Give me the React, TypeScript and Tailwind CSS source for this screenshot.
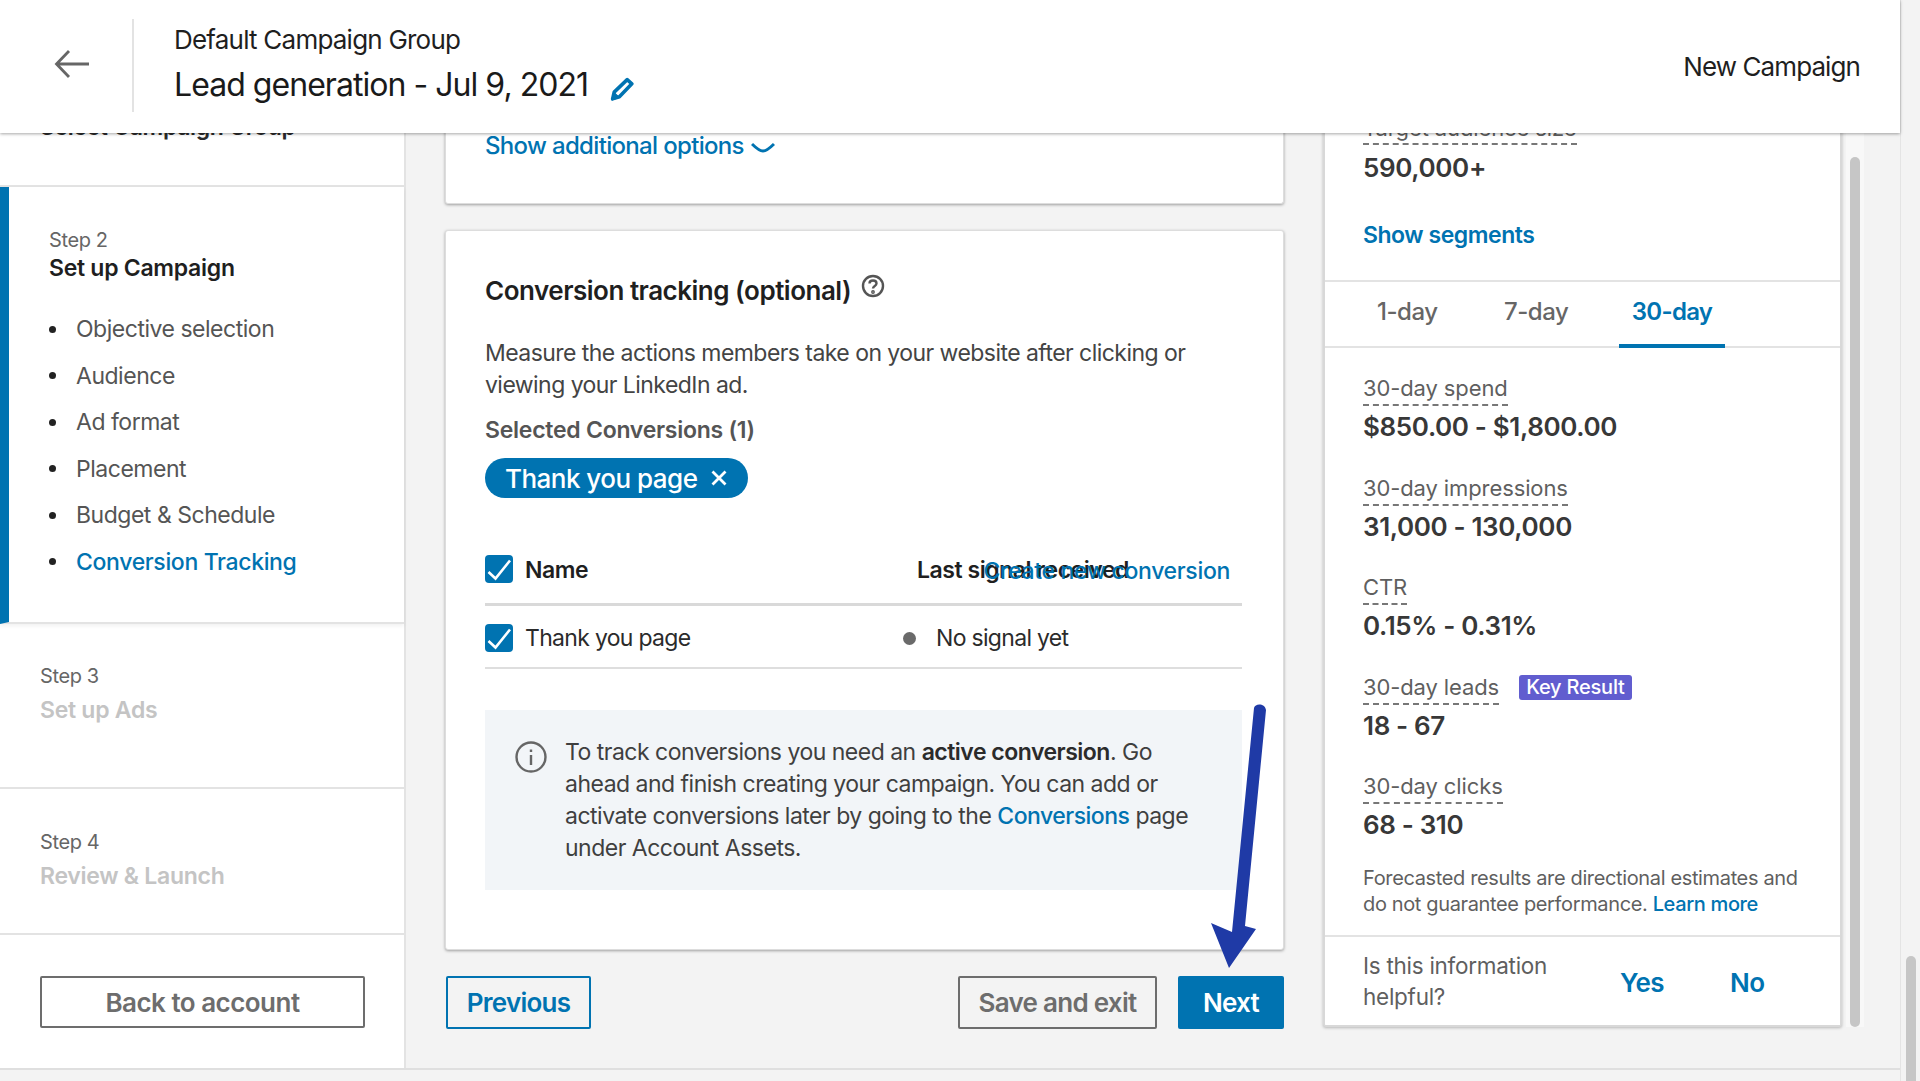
import React from "react";

const Check = () => (
  <span className="flex h-[28px] w-[28px] shrink-0 items-center justify-center rounded-[4px] bg-[#0073b1]">
    <svg width="28" height="28" viewBox="0 0 28 28" fill="none" stroke="#fff" strokeWidth="2.6">
      <path d="M3.5 17 L10.5 23.5 L25 5.5" />
    </svg>
  </span>
);

const Metric = ({ label, value, badge }: { label: string; value: string; badge?: boolean }) => (
  <div className="h-[99.6px]">
    <div className="flex items-start">
      <span className="border-b-2 border-dashed border-[#777] pb-[1px] text-[22px] leading-[30px] tracking-[-0.005em] text-[#5f5f5f]">{label}</span>
      {badge && (
        <span className="ml-[20px] mt-[3px] rounded-[3px] bg-[#615dcf] px-[7px] text-[20px] font-medium leading-[25px] tracking-[-0.01em] text-white">Key Result</span>
      )}
    </div>
    <div className="mt-[3px] text-[26px] font-semibold leading-[36px] tracking-[-0.014em] text-[#383838]">{value}</div>
  </div>
);

export default function App() {
  return (
    <div className="flex h-[1081px] w-[1920px] overflow-hidden bg-[#f3f3f3] tracking-[-0.03em] text-[#2b2b2b]" style={{ fontFamily: "Inter, 'Liberation Sans', sans-serif" }}>
      <div className="relative w-[1901px] shrink-0 border-r border-[#e4e4e4]">
        {/* Header */}
        <header className="absolute left-0 top-0 z-10 flex h-[133px] w-full items-center bg-white shadow-[0_1px_3px_rgba(0,0,0,0.35)]">
          <div className="flex h-[93px] w-[134px] -translate-y-[1px] items-center justify-center border-r-2 border-[#e3e3e3] pl-[12px] pb-[4px]">
            <svg width="36" height="32" viewBox="0 0 36 32" fill="none" stroke="#666" strokeWidth="2.8">
              <path d="M35 16 H3 M15 3 L2.5 16 L15 29" />
            </svg>
          </div>
          <div className="ml-[40px] flex-1 -translate-y-[2px]">
            <div className="text-[26px] leading-[36px] tracking-[-0.03em] text-[#1f1f1f]">Default Campaign Group</div>
            <div className="mt-[5px] flex items-center text-[32px] leading-[44px] tracking-[-0.03em] text-[#1a1a1a]">
              <span>Lead generation - Jul 9, 2021</span>
              <svg className="ml-[22px] mt-[6px]" width="25" height="25" viewBox="0 0 24 24" fill="none" stroke="#0073b1" strokeWidth="3.4" strokeLinejoin="round">
                <path d="M16.5 3.5 L21 7.5 L9 20 L2.5 22 L4 15.5 Z" />
                <path d="M2 23 L4 16 L9 20.5 Z" fill="#0073b1" strokeWidth="1" />
              </svg>
            </div>
          </div>
          <div className="mr-[40px] text-[26px] tracking-[-0.035em] text-[#1f1f1f]">New Campaign</div>
        </header>

        <div className="flex h-[1070px] border-b-2 border-[#dfdfdf]">
          {/* Sidebar */}
          <aside className="flex w-[406px] shrink-0 flex-col border-r-2 border-[#e3e3e3] bg-white">
            <div className="h-[187px] border-b-2 border-[#e3e3e3] pl-[40px] pt-[113px] text-[23px] font-semibold leading-[28px] tracking-[-0.015em] text-[#2b2b2b]">Select Campaign Group</div>
            <div className="h-[437px] border-b-2 border-l-[9px] border-[#e3e3e3] border-l-[#0073b1] pl-[40px] pt-[39px] shadow-[0_2px_4px_rgba(0,0,0,0.06)]">
              <div className="text-[20px] leading-[28px] tracking-[-0.02em] text-[#666]">Step 2</div>
              <div className="-mt-[2px] text-[23px] font-semibold leading-[32px] tracking-[-0.012em] text-[#1f1f1f]">Set up Campaign</div>
              <ul className="mt-[29px] text-[23px] leading-[32px] text-[#555]">
                {["Objective selection", "Audience", "Ad format", "Placement", "Budget & Schedule"].map((t) => (
                  <li key={t} className="mb-[14.5px] flex items-center">
                    <span className="mr-[20px] h-[7px] w-[7px] rounded-full bg-[#222]" />
                    {t}
                  </li>
                ))}
                <li className="flex items-center font-medium tracking-[-0.015em] text-[#0073b1]">
                  <span className="mr-[20px] h-[7px] w-[7px] rounded-full bg-[#222]" />
                  Conversion Tracking
                </li>
              </ul>
            </div>
            <div className="h-[165px] border-b-2 border-[#e3e3e3] pl-[40px] pt-[38px]">
              <div className="text-[20px] leading-[28px] tracking-[-0.02em] text-[#666]">Step 3</div>
              <div className="mt-[4px] text-[23px] font-semibold leading-[32px] tracking-[-0.012em] text-[#c4c4c4]">Set up Ads</div>
            </div>
            <div className="h-[146px] border-b-2 border-[#e3e3e3] pl-[40px] pt-[39px]">
              <div className="text-[20px] leading-[28px] tracking-[-0.02em] text-[#666]">Step 4</div>
              <div className="mt-[4px] text-[23px] font-semibold leading-[32px] tracking-[-0.012em] text-[#c4c4c4]">Review &amp; Launch</div>
            </div>
            <div className="px-[40px] pt-[41px]">
              <button className="h-[52px] w-[325px] rounded-[2px] border-2 border-[#6d6d6d] text-[26px] font-semibold tracking-[-0.02em] text-[#6d6d6d]">Back to account</button>
            </div>
          </aside>

          {/* Middle column */}
          <main className="ml-[39px] flex w-[839px] shrink-0 flex-col">
            <div className="h-[204px] rounded-[3px] border-x border-b border-[#ddd] bg-white pl-[39px] pt-[129px] shadow-[0_1px_3px_rgba(0,0,0,0.35)]">
              <div className="flex items-center text-[24px] font-medium leading-[34px] tracking-[-0.028em] text-[#0073b1]">
                Show additional options
                <svg className="ml-[7px] mt-[3px]" width="24" height="12" viewBox="0 0 24 12" fill="none" stroke="#0073b1" strokeWidth="3">
                  <path d="M1 2 C6 7 9 9 12 9 C15 9 18 7 23 2" />
                </svg>
              </div>
            </div>
            <section className="relative mt-[26px] h-[720px] rounded-[3px] border border-[#ddd] bg-white pl-[39px] pr-[40px] pt-[40px] shadow-[0_1px_3px_rgba(0,0,0,0.35)]">
              <div className="flex items-start">
                <h2 className="text-[26px] font-semibold leading-[40px] tracking-[-0.019em] text-[#1f1f1f]">Conversion tracking (optional)</h2>
                <svg className="ml-[10px] mt-[3px]" width="24" height="24" viewBox="0 0 24 24" fill="none" stroke="#555" strokeWidth="2.4">
                  <circle cx="12" cy="12" r="10" />
                  <path d="M8.5 9.5 C8.5 5.5 15.5 5.5 15.5 9.5 C15.5 12 12 12 12 14.5" />
                  <circle cx="12" cy="18" r="0.7" />
                </svg>
              </div>
              <p className="mt-[26px] w-[760px] text-[23px] leading-[32px] tracking-[-0.024em] text-[#444]">
                Measure the actions members take on your website after clicking or viewing your LinkedIn ad.
              </p>
              <div className="mt-[13px] text-[23px] font-semibold leading-[32px] tracking-[-0.011em] text-[#555]">Selected Conversions (1)</div>
              <div className="mt-[12px] flex h-[40px] w-[263px] items-center rounded-full bg-[#0073b1] pl-[20px] text-[26px] font-medium tracking-[-0.02em] text-white">
                Thank you page
                <svg className="ml-[13px]" width="18" height="18" viewBox="0 0 18 18" fill="none" stroke="#fff" strokeWidth="2.8">
                  <path d="M2.5 2.5 L15.5 15.5 M15.5 2.5 L2.5 15.5" />
                </svg>
              </div>
              <div className="relative mt-[57px] w-[757px]">
                <div className="flex h-[51px] items-start border-b-[3px] border-[#d9d9d9] text-[23px] font-semibold leading-[30px] tracking-[-0.02em] text-[#1f1f1f]">
                  <Check />
                  <span className="ml-[12px] w-[392px]">Name</span>
                  <span>Last signal received</span>
                  <span className="absolute right-[12px] top-[1px] font-medium tracking-[-0.014em] text-[#0073b1]">Create new conversion</span>
                </div>
                <div className="flex h-[63px] items-center border-b-2 border-[#dedede] pt-[3px] text-[23px] tracking-[-0.03em] text-[#2b2b2b]">
                  <Check />
                  <span className="ml-[12px] w-[378px]">Thank you page</span>
                  <span className="h-[13px] w-[13px] rounded-full bg-[#6a6a6a]" />
                  <span className="ml-[20px]">No signal yet</span>
                </div>
              </div>
              <div className="mt-[41px] flex h-[180px] w-[757px] bg-[#f2f5f8] pl-[30px] pt-[26px] text-[23px] leading-[32px] tracking-[-0.022em] text-[#3f3f3f]">
                <svg className="mt-[5px] shrink-0" width="32" height="32" viewBox="0 0 32 32" fill="none" stroke="#666" strokeWidth="2.4">
                  <circle cx="16" cy="16" r="14.5" />
                  <path d="M16 14 V24 M16 8.5 V11" />
                </svg>
                <p className="ml-[18px] w-[635px]">
                  To track conversions you need an <b className="font-semibold text-[#2b2b2b]">active conversion</b>. Go ahead and finish creating your campaign. You can add or activate conversions later by going to the <span className="font-medium text-[#0073b1]">Conversions</span> page under Account Assets.
                </p>
              </div>
            </section>
            <div className="mt-[26px] flex h-[53px] items-stretch text-[26px] font-semibold tracking-[-0.028em]">
              <button className="ml-[1px] w-[145px] rounded-[2px] border-2 border-[#0073b1] text-[#0073b1]">Previous</button>
              <button className="ml-auto w-[199px] rounded-[2px] border-2 border-[#6d6d6d] text-[#6d6d6d]">Save and exit</button>
              <button className="ml-[21px] w-[106px] rounded-[2px] bg-[#0073b1] text-white">Next</button>
            </div>
          </main>

          {/* Right panel */}
          <aside className="ml-[39px] h-[1027px] w-[519px] shrink-0 rounded-b-[3px] border-x-2 border-b-2 border-[#d8d8d8] bg-white shadow-[0_1px_3px_rgba(0,0,0,0.25)]">
            <div className="h-[282px] border-b-2 border-[#e3e3e3] pl-[38px] pt-[113px]">
              <span className="inline-block border-b-2 border-dashed border-[#777] text-[22px] leading-[30px] tracking-[-0.005em] text-[#5f5f5f]">Target audience size</span>
              <div className="mt-[5px] text-[26px] font-semibold leading-[36px] tracking-[-0.014em] text-[#383838]">590,000+</div>
              <div className="mt-[32px] text-[23px] font-semibold leading-[34px] tracking-[-0.02em] text-[#0073b1]">Show segments</div>
            </div>
            <div className="flex h-[66px] border-b-2 border-[#e3e3e3] pl-[13px] text-[24px] font-medium tracking-[-0.02em] text-[#666]">
              <span className="w-[155px] pt-[12px] pl-[39px]">1-day</span>
              <span className="w-[126px] pt-[12px] pl-[11px]">7-day</span>
              <span className="-mb-[2px] h-[66px] w-[106px] border-b-4 border-[#0073b1] pt-[12px] text-center font-semibold tracking-[-0.03em] text-[#0073b1]">30-day</span>
            </div>
            <div className="pl-[38px] pt-[25px]">
              <Metric label="30-day spend" value="$850.00 - $1,800.00" />
              <Metric label="30-day impressions" value="31,000 - 130,000" />
              <Metric label="CTR" value="0.15% - 0.31%" />
              <Metric label="30-day leads" value="18 - 67" badge />
              <Metric label="30-day clicks" value="68 - 310" />
              <p className="-mt-[6px] w-[445px] text-[20px] leading-[26px] tracking-[-0.018em] text-[#5f5f5f]">
                Forecasted results are directional estimates and do not guarantee performance. <span className="font-medium text-[#0073b1]">Learn more</span>
              </p>
            </div>
            <div className="mt-[18px] flex border-t-2 border-[#e3e3e3] pl-[38px] pt-[13px]">
              <p className="w-[200px] text-[22.5px] leading-[31px] tracking-[-0.012em] text-[#5f5f5f]">Is this information helpful?</p>
              <span className="ml-[57px] mt-[17px] text-[26px] font-semibold leading-[32px] tracking-[-0.02em] text-[#0073b1]">Yes</span>
              <span className="ml-[66px] mt-[17px] text-[26px] font-semibold leading-[32px] tracking-[-0.02em] text-[#0073b1]">No</span>
            </div>
          </aside>

          {/* Inner scrollbar */}
          <div className="ml-[4px] h-[1027px] w-[18px] bg-[#f8f8f8] px-[4px] pt-[157px]">
            <div className="h-[870px] w-[10px] rounded-full bg-[#c6c6c6]" />
          </div>
        </div>

        {/* Annotation arrow */}
        <svg className="absolute left-[1202px] top-[700px] z-20" width="70" height="275" viewBox="0 0 70 275">
          <path d="M52 8 C53 3 63 3 64 10 L43 226 L54 229 L27 268 L9 223 L30 232 Z" fill="#1f3aa6" />
        </svg>
      </div>

      {/* Page scrollbar */}
      <div className="flex-1 pl-[5px] pt-[956px]">
        <div className="h-[125px] w-[10px] rounded-t-full bg-[#c6c6c6]" />
      </div>
    </div>
  );
}
